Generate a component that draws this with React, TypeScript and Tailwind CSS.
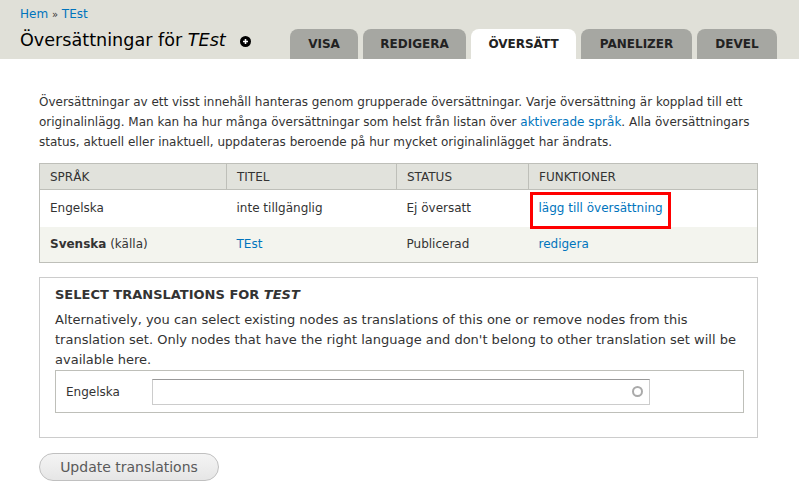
import React from "react";

const tabs = ["VISA", "REDIGERA", "ÖVERSÄTT", "PANELIZER", "DEVEL"];

export default function App() {
  return (
    <div className="w-[799px] h-[488px] bg-white text-[#333] overflow-hidden" style={{ fontFamily: '"DejaVu Sans", sans-serif' }}>
      {/* header */}
      <div className="bg-[#e0e0d8] h-[59px] pl-[20px] flex items-end justify-between">
        <div className="self-start pt-[6px]">
          <div className="text-[12px] leading-[16px] text-[#0074bd]">
            Hem <span className="text-[#333] text-[10px]">»</span> TEst
          </div>
          <div className="flex items-center mt-[5px]">
            <h1 className="text-[17.6px] leading-[24px] font-normal text-black">
              Översättningar för <em>TEst</em>
            </h1>
            <span className="ml-[14px] mt-[2px] w-[11px] h-[11px] rounded-full bg-black flex items-center justify-center">
              <svg width="7" height="7" viewBox="0 0 7 7">
                <path d="M3.5 1v5M1 3.5h5" stroke="white" strokeWidth="1.6" />
              </svg>
            </span>
          </div>
        </div>
        <div className="flex gap-[5px] mr-[22px]">
          {tabs.map((t, i) => (
            <div
              key={t}
              className={
                "h-[30px] rounded-t-[8px] px-[19px] flex items-center justify-center text-[12px] font-bold text-[#222] " +
                (i === 2 ? "bg-white w-[105px]" : "bg-[#a6a7a2]") +
                (i === 0 ? " w-[68px]" : "") +
                (i === 1 ? " w-[103px]" : "") +
                (i === 3 ? " w-[111px]" : "") +
                (i === 4 ? " w-[80px]" : "")
              }
            >
              {t}
            </div>
          ))}
        </div>
      </div>

      <div className="px-[39px] pt-[33px] w-[797px]">
        <p className="text-[12px] leading-[20px] w-[720px]">
          Översättningar av ett visst innehåll hanteras genom grupperade översättningar. Varje översättning är kopplad till ett originalinlägg. Man kan ha hur många översättningar som helst från listan över{" "}
          <span className="text-[#0074bd]">aktiverade språk</span>. Alla översättningars status, aktuell eller inaktuell, uppdateras beroende på hur mycket originalinlägget har ändrats.
        </p>

        <div className="relative mt-[11px]">
          <table className="w-[719px] border-collapse text-[12px]">
            <thead>
              <tr className="bg-[#e1e2dc] h-[26px]">
                <th className="border border-[#bebfb9] text-left font-normal pl-[10px] w-[187px]">SPRÅK</th>
                <th className="border border-[#bebfb9] text-left font-normal pl-[10px] w-[170px]">TITEL</th>
                <th className="border border-[#bebfb9] text-left font-normal pl-[10px] w-[132px]">STATUS</th>
                <th className="border border-[#bebfb9] text-left font-normal pl-[10px]">FUNKTIONER</th>
              </tr>
            </thead>
            <tbody>
              <tr className="bg-white h-[37px]">
                <td className="border-l border-[#bebfb9] pl-[10px]">Engelska</td>
                <td className="pl-[10px]">inte tillgänglig</td>
                <td className="pl-[10px]">Ej översatt</td>
                <td className="border-r border-[#bebfb9] pl-[10px] text-[#0074bd]">lägg till översättning</td>
              </tr>
              <tr className="bg-[#f3f4ee] h-[36px] border-b border-[#bebfb9]">
                <td className="border-l border-[#bebfb9] pl-[10px]"><b>Svenska</b> (källa)</td>
                <td className="pl-[10px] text-[#0074bd]">TEst</td>
                <td className="pl-[10px]">Publicerad</td>
                <td className="border-r border-[#bebfb9] pl-[10px] text-[#0074bd]">redigera</td>
              </tr>
            </tbody>
          </table>
          <div className="absolute left-[491px] top-[29px] w-[141px] h-[37px] border-[3px] border-[#f00]" />
        </div>

        <div className="mt-[14px] w-[719px] h-[161px] border border-[#ccc] pl-[15px] pr-[13px] pt-[8px]">
          <div className="text-[13px] font-bold text-[#333] leading-[18px]">
            SELECT TRANSLATIONS FOR <em>TEST</em>
          </div>
          <p className="mt-[6px] text-[13px] leading-[20px] text-[#333]">
            Alternatively, you can select existing nodes as translations of this one or remove nodes from this translation set. Only nodes that have the right language and don't belong to other translation set will be available here.
          </p>
          <div className="border border-[#bebfb9] h-[43px] flex items-center pl-[10px]">
            <span className="text-[12px] w-[86px]">Engelska</span>
            <div className="w-[498px] h-[26px] border border-[#ccc] border-t-[#999] flex items-center justify-end pr-[6px]">
              <span className="w-[11px] h-[11px] rounded-full border-[2px] border-[#aaa]" />
            </div>
          </div>
        </div>

        <button className="mt-[15px] w-[180px] h-[28px] rounded-full border border-[#c0c0c0] bg-gradient-to-b from-[#f4f4f4] to-[#e6e6e6] text-[14px] text-[#5a5a5a]">
          Update translations
        </button>
      </div>
    </div>
  );
}
